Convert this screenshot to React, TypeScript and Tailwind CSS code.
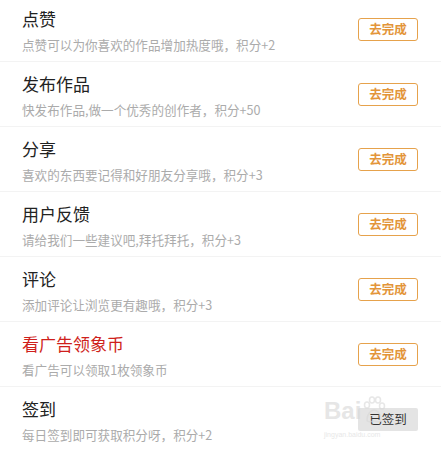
import React from 'react';

type Task = {
    title: string;
    desc: string;
    done?: boolean;
    highlight?: boolean;
};

const tasks: Task[] = [
    { title: "点赞", desc: "点赞可以为你喜欢的作品增加热度哦，积分+2" },
    { title: "发布作品", desc: "快发布作品,做一个优秀的创作者，积分+50" },
    { title: "分享", desc: "喜欢的东西要记得和好朋友分享哦，积分+3" },
    { title: "用户反馈", desc: "请给我们一些建议吧,拜托拜托，积分+3" },
    { title: "评论", desc: "添加评论让浏览更有趣哦，积分+3" },
    { title: "看广告领象币", desc: "看广告可以领取1枚领象币", highlight: true },
    { title: "签到", desc: "每日签到即可获取积分呀，积分+2", done: true },
];

const font = { fontFamily: '"Noto Sans CJK SC", "Noto Sans", sans-serif' };

// 百度经验 watermark over the last row
function Watermark() {
    return (
        <div className="pointer-events-none absolute left-[324px] top-[396px] flex flex-col opacity-60">
            <div className="flex items-end">
                <span className="text-[24px] font-bold leading-none text-[#d6d6d6]" style={{ fontFamily: '"Liberation Sans", sans-serif' }}>
                    Bai
                </span>
                <svg width="26" height="30" viewBox="0 0 26 30" className="-mb-[3px]">
                    <g fill="none" stroke="#d8d8d8" strokeWidth="1.5">
                        <ellipse cx="6" cy="9" rx="2.5" ry="3" />
                        <ellipse cx="11" cy="4" rx="2.5" ry="3" />
                        <ellipse cx="17" cy="4" rx="2.5" ry="3" />
                        <ellipse cx="21" cy="10" rx="2.5" ry="3" />
                        <path d="M6 24c0-6 4-10 7-10s7 4 7 10c0 2-3 2-7 1-4 1-7 1-7-1z" />
                    </g>
                </svg>
            </div>
            <span className="mt-[8px] text-[7px] leading-none text-[#d8d8d8]" style={{ fontFamily: '"Liberation Sans", sans-serif' }}>
                jingyan.baidu.com
            </span>
        </div>
    );
}

export default function App() {
    return (
        <div className="relative h-[450px] w-[441px] overflow-hidden bg-white" style={font}>
            <div className="-mt-[3px] flex flex-col">
                {tasks.map((task) => (
                    <div
                        key={task.title}
                        className="flex h-[65px] items-center justify-between border-b border-[#f3f3f3] pl-[22px] pr-[23px]"
                    >
                        <div className="flex flex-col pt-[3px]">
                            <h4
                                className={`text-[17px] leading-[24px] ${task.highlight ? 'text-[#cf1f1c]' : 'text-[#222222]'}`}
                            >
                                {task.title}
                            </h4>
                            <p className="mt-[5px] text-[12.6px] leading-[18px] text-[#ababab]">{task.desc}</p>
                        </div>
                        {task.done ? (
                            <div className="flex h-[23px] w-[60px] items-center justify-center rounded-[2px] bg-[#e4e4e4] text-[12.5px] text-[#333333]">
                                已签到
                            </div>
                        ) : (
                            <div className="flex h-[23px] w-[60px] items-center justify-center rounded-[3px] border border-[#e6a24c] text-[12.5px] font-bold text-[#e3953a]">
                                去完成
                            </div>
                        )}
                    </div>
                ))}
            </div>
            <Watermark />
        </div>
    );
}
